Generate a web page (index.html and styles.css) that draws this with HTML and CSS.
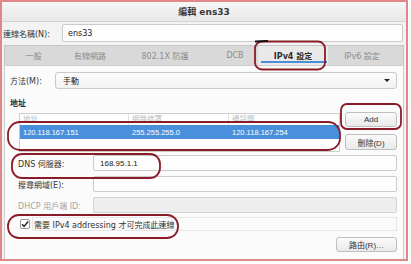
FILE: index.html
```html
<!DOCTYPE html>
<html>
<head>
<meta charset="utf-8">
<link rel="stylesheet" href="styles.css">
</head>
<body>
<div class="frame">
  <div class="titlebar"><span class="title">編輯 ens33</span></div>
  <div class="namerow">
    <span class="namelabel">連線名稱(N):</span>
    <div class="entry name-entry">ens33</div>
  </div>
  <div class="tabs">
    <div class="tab">一般</div>
    <div class="tab">有線網路</div>
    <div class="tab">802.1X 防護</div>
    <div class="tab">DCB</div>
    <div class="tab active">IPv4 設定</div>
    <div class="tab">IPv6 設定</div>
  </div>
  <div class="page">
    <div class="method-row">
      <span class="method-label">方法(M):</span>
      <div class="select"><span>手動</span><span class="arrow"></span></div>
    </div>
    <div class="section-title">地址</div>
    <div class="addr">
      <div class="table">
        <div class="thead">
          <div class="col c1">地址</div>
          <div class="col c2">網路遮罩</div>
          <div class="col c3">通訊閘</div>
        </div>
        <div class="trow selected">
          <div class="col c1">120.118.167.151</div>
          <div class="col c2">255.255.255.0</div>
          <div class="col c3">120.118.167.254</div>
        </div>
      </div>
      <div class="addr-buttons">
        <div class="button add">Add</div>
        <div class="button del">刪除(D)</div>
      </div>
    </div>
    <div class="form">
      <span class="flabel">DNS 伺服器:</span>
      <div class="entry">168.95.1.1</div>
      <span class="flabel">搜尋網域(E):</span>
      <div class="entry"></div>
      <span class="flabel disabled">DHCP 用戶端 ID:</span>
      <div class="entry disabled-entry"></div>
    </div>
    <div class="check-row">
      <span class="checkbox">
        <svg width="10" height="10" viewBox="0 0 10 10"><path d="M2 5.2 L4.1 7.4 L8.2 2.4" fill="none" stroke="#2e2e2e" stroke-width="1.6"/></svg>
      </span>
      <div class="check-label">需要 IPv4 addressing 才可完成此連線</div>
    </div>
    <div class="bottom-row">
      <div class="button route">路由(R)…</div>
    </div>
  </div>
</div>
<svg class="marks" width="411" height="264" viewBox="0 0 411 264">
  <g fill="none" stroke="#8a1b28" stroke-width="1.8">
    <rect x="255" y="41.5" width="70" height="28" rx="7"/>
    <rect x="8" y="122" width="332" height="28" rx="12"/>
    <rect x="341" y="104" width="60" height="25" rx="6"/>
    <rect x="12" y="154" width="148" height="24" rx="10"/>
    <rect x="8" y="215" width="170" height="23" rx="11"/>
  </g>
  <path d="M255 41.5 L268 41" stroke="#111" stroke-width="2"/>
</svg>
</body>
</html>
```
FILE: styles.css
```css
* { box-sizing: border-box; }

body {
  margin: 0;
  background: #ffffff;
  font-family: "DejaVu Sans", "Noto Sans CJK TC", sans-serif;
  font-size: 8px;
  color: #2e3436;
  position: relative;
  width: 411px;
  height: 264px;
  overflow: hidden;
}

.frame {
  width: 408px;
  height: 261px;
  border: 2px solid #e08787;
  background: #f3f3f3;
  display: flex;
  flex-direction: column;
}

.titlebar {
  height: 20px;
  flex: none;
  background: linear-gradient(#f6f6f6, #e8e8e8);
  border-bottom: 1px solid #d2d2d2;
  display: flex;
  align-items: center;
  justify-content: center;
}

.title {
  font-weight: bold;
  font-size: 9px;
  color: #3a3a3a;
}

.namerow {
  flex: none;
  display: flex;
  align-items: center;
  padding: 2px 3px 0 1px;
}

.namelabel {
  width: 59px;
  flex: none;
  color: #333;
}

.entry {
  height: 16px;
  border: 1px solid #cbcbcb;
  border-radius: 2px;
  background: #fdfdfd;
  display: flex;
  align-items: center;
  padding-left: 5px;
  color: #222;
}

.name-entry {
  flex: 1;
  height: 18px;
  padding-left: 5px;
}

.tabs {
  flex: none;
  margin: 3px 2px 0 2px;
  height: 20px;
  background: #d9d9d9;
  border: 1px solid #c6c6c6;
  border-bottom: none;
  display: flex;
}

.tab {
  display: flex;
  align-items: center;
  justify-content: center;
  color: #8c8c8c;
  position: relative;
}

.tab:nth-child(1) { width: 57px; }
.tab:nth-child(2) { width: 56px; }
.tab:nth-child(3) { width: 94px; }
.tab:nth-child(4) { width: 46px; }
.tab:nth-child(5) { width: 70px; }
.tab:nth-child(6) { width: 68px; }

.tab.active {
  background: #e9e9e9;
  color: #2e2e2e;
  font-weight: bold;
}

.tab.active::after {
  content: "";
  position: absolute;
  left: 3px;
  right: 1px;
  bottom: 2px;
  height: 2px;
  background: #4a90d9;
}

.page {
  flex: 1;
  margin: 0 2px;
  background: #fbfbfb;
  border: 1px solid #cfcfcf;
  border-bottom: none;
  padding: 6px 6px 0 5px;
  display: flex;
  flex-direction: column;
}

.method-row {
  display: flex;
  align-items: center;
}

.method-label {
  width: 45px;
  flex: none;
  color: #333;
}

.select {
  flex: 1;
  height: 17px;
  border: 1px solid #c9c9c9;
  border-radius: 3px;
  background: linear-gradient(#fdfdfd, #f1f1f1);
  display: flex;
  align-items: center;
  justify-content: space-between;
  padding: 0 6px 0 7px;
  color: #222;
}

.arrow {
  width: 0;
  height: 0;
  border-left: 3px solid transparent;
  border-right: 3px solid transparent;
  border-top: 3px solid #222;
}

.section-title {
  margin-top: 9px;
  line-height: 12px;
  font-weight: bold;
  color: #2e2e2e;
}

.addr {
  margin-top: 3px;
  margin-left: 9px;
  display: flex;
}

.table {
  width: 321px;
  height: 39px;
  border: 1px solid #cdcdcd;
  background: #ffffff;
  font-family: "Liberation Sans", "Noto Sans CJK TC", sans-serif;
  font-size: 7.5px;
}

.thead, .trow {
  display: flex;
}

.thead {
  height: 11px;
  color: #bdbdbd;
  align-items: flex-end;
}

.thead .col {
  border-right: 1px solid #e2e2e2;
  line-height: 9px;
  overflow: hidden;
  height: 11px;
  padding-top: 1px;
}

.thead .col.c3 { border-right: none; }

.trow {
  height: 14px;
  align-items: center;
}

.trow.selected {
  background: #4a8fdb;
  color: #ffffff;
}

.col {
  padding-left: 3px;
}

.c1 { width: 109px; }
.c2 { width: 100px; }
.c3 { flex: 1; }

.addr-buttons {
  margin-left: 5px;
  width: 52px;
  display: flex;
  flex-direction: column;
  gap: 7px;
}

.button {
  border: 1px solid #bfbfbf;
  border-radius: 3px;
  background: linear-gradient(#fbfbfb, #e9e9e9);
  display: flex;
  align-items: center;
  justify-content: center;
  color: #333;
  font-family: "Liberation Sans", "Noto Sans CJK TC", sans-serif;
}

.button.add { height: 15px; margin-top: -1px; }
.button.del { height: 16px; }

.form {
  margin-top: 3px;
  margin-left: 8px;
  display: grid;
  grid-template-columns: 75px 1fr;
  grid-auto-rows: 16px;
  row-gap: 5px;
  align-items: center;
}

.flabel {
  color: #333;
}

.flabel.disabled {
  color: #a3a3a3;
}

.entry.disabled-entry {
  background: #eeeeee;
  border-color: #d3d3d3;
}

.form .entry {
  padding-left: 6px;
  font-family: "Liberation Sans", "Noto Sans CJK TC", sans-serif;
}

.check-row {
  margin-top: 4px;
  margin-left: 10px;
  height: 14px;
  display: flex;
  align-items: center;
}

.checkbox {
  width: 10px;
  height: 10px;
  border: 1px solid #9a9a9a;
  border-radius: 2px;
  background: #fff;
  display: flex;
  align-items: center;
  justify-content: center;
  flex: none;
}

.checkbox svg {
  display: block;
  margin: -1px;
}

.check-label {
  margin-left: 2px;
  flex: 1;
  height: 14px;
  border: 1px solid #e6e6e6;
  display: flex;
  align-items: center;
  padding-left: 1px;
  color: #333;
}

.bottom-row {
  margin-top: 6px;
  display: flex;
  justify-content: flex-end;
}

.button.route {
  width: 61px;
  height: 15px;
}

.marks {
  position: absolute;
  left: 0;
  top: 0;
  pointer-events: none;
}
```
